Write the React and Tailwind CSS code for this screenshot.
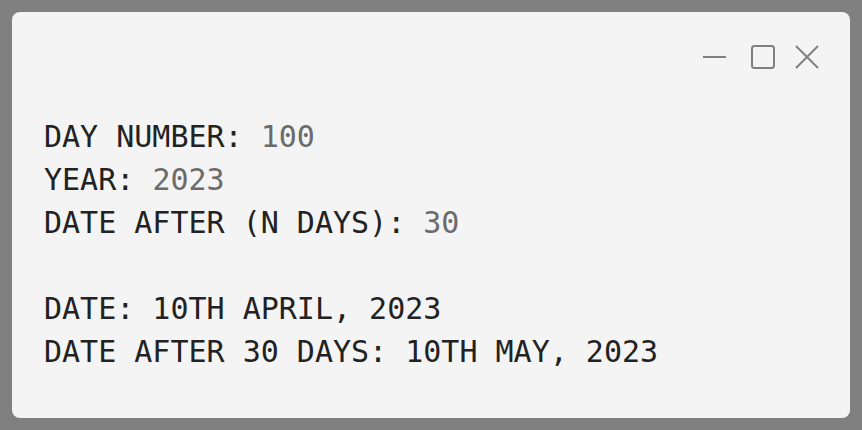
import React from 'react'

const lines = [
  { label: 'DAY NUMBER: ', value: '100' },
  { label: 'YEAR: ', value: '2023' },
  { label: 'DATE AFTER (N DAYS): ', value: '30' },
]

const App = () => {
  return (
    <div className="w-[862px] h-[430px] bg-[#808080] p-3">
      <div className="h-full rounded-lg bg-[#f4f4f4] pl-8 pr-[31px] pt-[33px]">
        {/* Window controls */}
        <div className="flex justify-end items-center text-[#808080]">
          <svg width="24" height="24" viewBox="0 0 24 24" fill="none" stroke="currentColor" strokeWidth="2">
            <path d="M1 12h23" />
          </svg>
          <svg className="ml-[25px]" width="24" height="24" viewBox="0 0 24 24" fill="none" stroke="currentColor" strokeWidth="2">
            <rect x="1" y="1" width="22" height="22" rx="2.5" />
          </svg>
          <svg className="ml-5" width="24" height="24" viewBox="0 0 24 24" fill="none" stroke="currentColor" strokeWidth="2">
            <path d="M1 1l22 22M23 1L1 23" />
          </svg>
        </div>

        {/* Output */}
        <div
          className="mt-[46px] text-[30px] leading-[43px] text-[#222222] whitespace-pre"
          style={{ fontFamily: '"DejaVu Sans Mono", monospace' }}
        >
          {lines.map((l) => (
            <div key={l.label}>
              {l.label}
              <span className="text-[#6b6b6b]">{l.value}</span>
            </div>
          ))}
          <div>&nbsp;</div>
          <div>DATE: 10TH APRIL, 2023</div>
          <div>DATE AFTER 30 DAYS: 10TH MAY, 2023</div>
        </div>
      </div>
    </div>
  )
}

export default App
